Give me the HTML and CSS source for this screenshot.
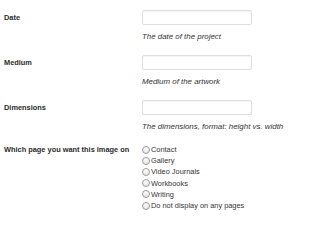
FILE: index.html
```html
<!DOCTYPE html>
<html>
<head>
<meta charset="utf-8">
<link rel="stylesheet" href="styles.css">
</head>
<body>
<div class="form">
  <div class="row">
    <div class="label">Date</div>
    <div class="field">
      <input class="text" type="text">
      <div class="help">The date of the project</div>
    </div>
  </div>
  <div class="row">
    <div class="label">Medium</div>
    <div class="field">
      <input class="text" type="text">
      <div class="help">Medium of the artwork</div>
    </div>
  </div>
  <div class="row">
    <div class="label">Dimensions</div>
    <div class="field">
      <input class="text" type="text">
      <div class="help">The dimensions, format: height vs. width</div>
    </div>
  </div>
  <div class="row radios-row">
    <div class="label">Which page you want this image on</div>
    <div class="field radios">
      <label class="opt"><input type="radio" name="page"><span>Contact</span></label>
      <label class="opt"><input type="radio" name="page"><span>Gallery</span></label>
      <label class="opt"><input type="radio" name="page"><span>Video Journals</span></label>
      <label class="opt"><input type="radio" name="page"><span>Workbooks</span></label>
      <label class="opt"><input type="radio" name="page"><span>Writing</span></label>
      <label class="opt"><input type="radio" name="page"><span>Do not display on any pages</span></label>
    </div>
  </div>
</div>
</body>
</html>
```
FILE: styles.css
```css
html, body {
  margin: 0;
  padding: 0;
  background: #ffffff;
}
body {
  font-family: "Liberation Sans", Arial, sans-serif;
  color: #333333;
  font-size: 7.4px;
}
.form {
  display: flex;
  flex-direction: column;
  padding-top: 10px;
}
.row {
  display: grid;
  grid-template-columns: 138px 1fr;
  padding-left: 4px;
  height: 45px;
  flex: none;
}
.label {
  font-weight: bold;
  color: #2b2b2b;
  line-height: 15px;
}
.field {
  display: flex;
  flex-direction: column;
}
.text {
  box-sizing: border-box;
  width: 110px;
  height: 15px;
  margin: 0;
  padding: 0;
  border: 1px solid #dedede;
  border-radius: 2px;
  background: #ffffff;
  box-shadow: inset 0 1px 1px rgba(0,0,0,0.04);
}
.help {
  font-style: italic;
  font-size: 7.9px;
  color: #333333;
  line-height: 10px;
  margin-top: 7px;
}
.radios-row {
  height: auto;
  margin-top: -1px;
  align-items: start;
}
.radios-row .label {
  line-height: 11.2px;
}
.radios {
  display: flex;
  flex-direction: column;
}
.opt {
  display: flex;
  align-items: center;
  flex: none;
  height: 11.2px;
  line-height: 11.2px;
}
.opt input {
  -webkit-appearance: none;
  appearance: none;
  box-sizing: border-box;
  flex: none;
  width: 8px;
  height: 8px;
  margin: 0 1px 0 0;
  border: 1px solid #9a9a9a;
  border-radius: 50%;
  background: linear-gradient(#ffffff, #e6e6e6);
}
.opt span {
  color: #333333;
}
```
